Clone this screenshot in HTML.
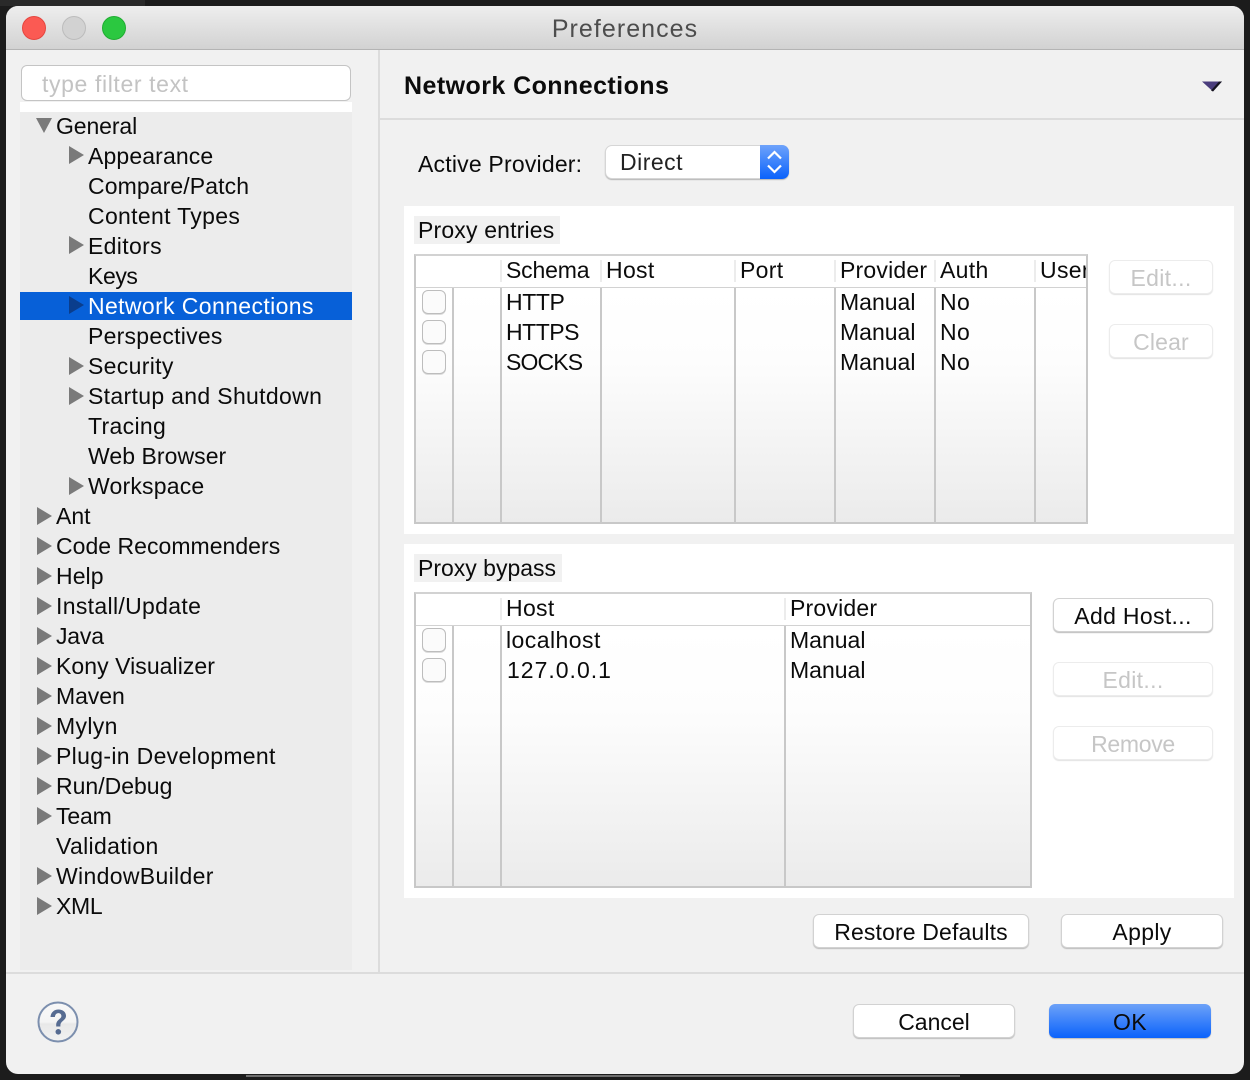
<!DOCTYPE html>
<html><head><meta charset="utf-8"><style>
html,body{margin:0;padding:0}
body{width:1250px;height:1080px;background:#1c1c1c;position:relative;overflow:hidden;font-family:"Liberation Sans",sans-serif;font-size:23px;letter-spacing:.33px;color:#0b0b0b}
#w{position:absolute;left:6px;top:6px;width:1238px;height:1068px;background:#f1f1f1;border-radius:12px;overflow:hidden}
.a{position:absolute}
.t{position:absolute;white-space:nowrap;line-height:30px;height:30px}
.b{position:absolute;box-sizing:border-box;background:#fff;border-radius:6px;border:1px solid #d2d2d2;box-shadow:0 1px 1px #bbb;text-align:center;line-height:34px;white-space:nowrap}
.d{color:#c6c6c6;box-shadow:0 1px 1px #e2e2e2;border-color:#ececec}
.c{position:absolute;box-sizing:border-box;left:422px;width:24px;height:24px;border:1px solid #bdbdbd;border-radius:6px;background:#fbfbfb;box-shadow:0 1px 0 #ddd}
.l{position:absolute;width:2px;background:#c8c8c8}
.h{position:absolute;width:2px;background:#ececec;height:22px}
svg{position:absolute}
</style></head><body>
<div class="a" style="left:0;top:0;width:145px;height:6px;background:#2a2a2a"></div>
<div class="a" style="left:246px;top:1075px;width:714px;height:2px;background:#6e6e6e"></div>
<div id="w" style="position:absolute"></div>
<div class="a" style="left:6px;top:6px;width:1238px;height:44px;border-radius:12px 12px 0 0;background:linear-gradient(#eeeeee,#d2d2d2);border-bottom:1px solid #b4b4b4;box-sizing:border-box"></div>
<div class="a" style="left:22px;top:16px;width:24px;height:24px;border-radius:50%;background:#fb5a53;box-sizing:border-box;border:1px solid #e5463f"></div>
<div class="a" style="left:62px;top:16px;width:24px;height:24px;border-radius:50%;background:#d2d2d2;box-sizing:border-box;border:1px solid #bcbcbc"></div>
<div class="a" style="left:102px;top:16px;width:24px;height:24px;border-radius:50%;background:#2bc840;box-sizing:border-box;border:1px solid #20ad32"></div>
<div class="t" style="left:0;width:1250px;text-align:center;top:14px;font-size:25px;color:#4d4d4d;letter-spacing:1.050px">Preferences</div>

<div class="a" style="left:20px;top:102px;width:332px;height:868px;background:#ececec"></div>
<div class="a" style="left:20px;top:102px;width:332px;height:10px;background:#fff"></div>
<div class="a" style="left:21px;top:65px;width:330px;height:36px;box-sizing:border-box;background:#fff;border:1px solid #c4c4c4;border-radius:6px"></div>
<div class="t" style="left:42px;top:69px;color:#c3c3c3;letter-spacing:.62px">type filter text</div>
<div class="a" style="left:20px;top:292px;width:332px;height:28px;background:#0760d8"></div>
<div class="a" style="left:378px;top:50px;width:2px;height:922px;background:#dcdcdc"></div>
<div class="a" style="left:380px;top:118px;width:864px;height:2px;background:#dcdcdc"></div>
<div class="a" style="left:6px;top:972px;width:1238px;height:2px;background:#dcdcdc"></div>

<svg style="left:0;top:0" width="360" height="930">
<g fill="#7a7a7a">
<path d="M36 118h16l-8 15z"/>
<path d="M69 146l15 9-15 9z"/>
<path d="M69 236l15 9-15 9z"/>
<path d="M69 357l15 9-15 9z"/>
<path d="M69 387l15 9-15 9z"/>
<path d="M69 477l15 9-15 9z"/>
<path d="M37 507l15 9-15 9z"/>
<path d="M37 537l15 9-15 9z"/>
<path d="M37 567l15 9-15 9z"/>
<path d="M37 597l15 9-15 9z"/>
<path d="M37 627l15 9-15 9z"/>
<path d="M37 657l15 9-15 9z"/>
<path d="M37 687l15 9-15 9z"/>
<path d="M37 717l15 9-15 9z"/>
<path d="M37 747l15 9-15 9z"/>
<path d="M37 777l15 9-15 9z"/>
<path d="M37 807l15 9-15 9z"/>
<path d="M37 867l15 9-15 9z"/>
<path d="M37 897l15 9-15 9z"/>
</g>
<path d="M69 296l15 9-15 9z" fill="#0a3d8c"/>
</svg>
<div class="t" style="left:56px;top:111px;letter-spacing:-.1px">General</div>
<div class="t" style="left:88px;top:141px;letter-spacing:.13px">Appearance</div>
<div class="t" style="left:88px;top:171px;letter-spacing:.1px">Compare/Patch</div>
<div class="t" style="left:88px;top:201px">Content Types</div>
<div class="t" style="left:88px;top:231px">Editors</div>
<div class="t" style="left:88px;top:261px;letter-spacing:-.4px">Keys</div>
<div class="t" style="left:88px;top:291px;color:#fff;letter-spacing:.38px">Network Connections</div>
<div class="t" style="left:88px;top:321px;letter-spacing:.25px">Perspectives</div>
<div class="t" style="left:88px;top:351px">Security</div>
<div class="t" style="left:88px;top:381px">Startup and Shutdown</div>
<div class="t" style="left:88px;top:411px">Tracing</div>
<div class="t" style="left:88px;top:441px;letter-spacing:.06px">Web Browser</div>
<div class="t" style="left:88px;top:471px;letter-spacing:.2px">Workspace</div>
<div class="t" style="left:56px;top:501px;letter-spacing:0">Ant</div>
<div class="t" style="left:56px;top:531px;letter-spacing:.03px">Code Recommenders</div>
<div class="t" style="left:56px;top:561px;letter-spacing:.08px">Help</div>
<div class="t" style="left:56px;top:591px">Install/Update</div>
<div class="t" style="left:56px;top:621px;letter-spacing:-.2px">Java</div>
<div class="t" style="left:56px;top:651px;letter-spacing:.06px">Kony Visualizer</div>
<div class="t" style="left:56px;top:681px;letter-spacing:-.07px">Maven</div>
<div class="t" style="left:56px;top:711px">Mylyn</div>
<div class="t" style="left:56px;top:741px">Plug-in Development</div>
<div class="t" style="left:56px;top:771px;letter-spacing:0">Run/Debug</div>
<div class="t" style="left:56px;top:801px;letter-spacing:-.17px">Team</div>
<div class="t" style="left:56px;top:831px">Validation</div>
<div class="t" style="left:56px;top:861px">WindowBuilder</div>
<div class="t" style="left:56px;top:891px;letter-spacing:-.33px">XML</div>

<div class="t" style="left:404px;top:71px;font-weight:bold;font-size:25px;letter-spacing:.44px">Network Connections</div>
<svg style="left:1200px;top:80px" width="24" height="14"><path d="M2 1.500h20l-9 10z" fill="#4a3d7d"/><path d="M22 1.500l-9 10-2-1 8-9z" fill="#15131f"/></svg>

<div class="t" style="left:418px;top:149px;letter-spacing:.2px">Active Provider:</div>
<div class="a" style="left:605px;top:145px;width:184px;height:34px;box-sizing:border-box;background:#fff;border:1px solid #d6d6d6;border-radius:7px;box-shadow:0 1px 1px #b5b5b5"></div>
<div class="t" style="left:620px;top:147px;color:#222;letter-spacing:.5px">Direct</div>
<div class="a" style="left:760px;top:145px;width:29px;height:34px;border-radius:0 7px 7px 0;background:linear-gradient(#6ea3fb,#0a62fb)"></div>
<svg style="left:760px;top:145px" width="29" height="34"><path d="M8 13.500l6.500-6.500 6.500 6.500M8 20.500l6.500 6.500 6.500-6.500" fill="none" stroke="#fff" stroke-width="2.200"/></svg>

<div class="a" style="left:404px;top:206px;width:830px;height:328px;background:#fff"></div>
<div class="a" style="left:414px;top:216px;width:146px;height:28px;background:#f1f1f1"></div>
<div class="t" style="left:418px;top:215px;letter-spacing:.17px">Proxy entries</div>
<div class="a" style="left:414px;top:254px;width:674px;height:270px;box-sizing:border-box;border:2px solid #c8c8c8;border-top-color:#d2d2d2;background:linear-gradient(#fff 12%,#fdfdfd 40%,#ebebeb 100%)"></div>
<div class="a" style="left:416px;top:287px;width:670px;height:1px;background:#d2d2d2"></div>
<div class="l" style="left:452px;top:288px;height:234px"></div>
<div class="l" style="left:500px;top:288px;height:234px"></div>
<div class="l" style="left:600px;top:288px;height:234px"></div>
<div class="l" style="left:734px;top:288px;height:234px"></div>
<div class="l" style="left:834px;top:288px;height:234px"></div>
<div class="l" style="left:934px;top:288px;height:234px"></div>
<div class="l" style="left:1034px;top:288px;height:234px"></div>
<div class="h" style="left:500px;top:260px"></div>
<div class="h" style="left:600px;top:260px"></div>
<div class="h" style="left:734px;top:260px"></div>
<div class="h" style="left:834px;top:260px"></div>
<div class="h" style="left:934px;top:260px"></div>
<div class="h" style="left:1034px;top:260px"></div>
<div class="t" style="left:506px;top:255px;letter-spacing:-.17px">Schema</div>
<div class="t" style="left:606px;top:255px">Host</div>
<div class="t" style="left:740px;top:255px">Port</div>
<div class="t" style="left:840px;top:255px;letter-spacing:.2px">Provider</div>
<div class="t" style="left:940px;top:255px">Auth</div>
<div class="t" style="left:1040px;top:255px;width:46px;overflow:hidden">User</div>
<div class="c" style="top:290px"></div><div class="c" style="top:320px"></div><div class="c" style="top:350px"></div>
<div class="t" style="left:506px;top:287px;letter-spacing:-.42px">HTTP</div>
<div class="t" style="left:506px;top:317px;letter-spacing:-.47px">HTTPS</div>
<div class="t" style="left:506px;top:347px;letter-spacing:-.87px">SOCKS</div>
<div class="t" style="left:840px;top:287px;letter-spacing:0">Manual</div>
<div class="t" style="left:840px;top:317px;letter-spacing:0">Manual</div>
<div class="t" style="left:840px;top:347px;letter-spacing:0">Manual</div>
<div class="t" style="left:940px;top:287px">No</div>
<div class="t" style="left:940px;top:317px">No</div>
<div class="t" style="left:940px;top:347px">No</div>
<div class="b d" style="left:1109px;top:260px;width:104px;height:34px">Edit...</div>
<div class="b d" style="left:1109px;top:324px;width:104px;height:34px;letter-spacing:.15px">Clear</div>

<div class="a" style="left:404px;top:544px;width:830px;height:354px;background:#fff"></div>
<div class="a" style="left:414px;top:554px;width:148px;height:28px;background:#f1f1f1"></div>
<div class="t" style="left:418px;top:553px;letter-spacing:0">Proxy bypass</div>
<div class="a" style="left:414px;top:592px;width:618px;height:296px;box-sizing:border-box;border:2px solid #c8c8c8;border-top-color:#d2d2d2;background:linear-gradient(#fff 12%,#fdfdfd 40%,#ebebeb 100%)"></div>
<div class="a" style="left:416px;top:625px;width:614px;height:1px;background:#d2d2d2"></div>
<div class="l" style="left:452px;top:626px;height:260px"></div>
<div class="l" style="left:500px;top:626px;height:260px"></div>
<div class="l" style="left:784px;top:626px;height:260px"></div>
<div class="h" style="left:500px;top:598px"></div>
<div class="h" style="left:784px;top:598px"></div>
<div class="t" style="left:506px;top:593px">Host</div>
<div class="t" style="left:790px;top:593px;letter-spacing:.2px">Provider</div>
<div class="c" style="top:628px"></div><div class="c" style="top:658px"></div>
<div class="t" style="left:506px;top:625px;letter-spacing:.45px">localhost</div>
<div class="t" style="left:507px;top:655px;letter-spacing:1px">127.0.0.1</div>
<div class="t" style="left:790px;top:625px;letter-spacing:0">Manual</div>
<div class="t" style="left:790px;top:655px;letter-spacing:0">Manual</div>
<div class="b" style="left:1053px;top:598px;width:160px;height:34px">Add Host...</div>
<div class="b d" style="left:1053px;top:662px;width:160px;height:34px">Edit...</div>
<div class="b d" style="left:1053px;top:726px;width:160px;height:34px;letter-spacing:-.33px">Remove</div>

<div class="b" style="left:813px;top:914px;width:216px;height:34px;letter-spacing:.14px">Restore Defaults</div>
<div class="b" style="left:1061px;top:914px;width:162px;height:34px">Apply</div>
<div class="b" style="left:853px;top:1004px;width:162px;height:34px;letter-spacing:0">Cancel</div>
<div class="b" style="left:1049px;top:1004px;width:162px;height:34px;border:0;line-height:36px;background:linear-gradient(#6da2f8,#0a62fb)">OK</div>

<svg style="left:36px;top:1000px" width="44" height="44">
<defs><linearGradient id="g" x1="0" y1="0" x2="0" y2="1"><stop offset="0" stop-color="#f8f8f8"/><stop offset=".5" stop-color="#f4f4f4"/><stop offset=".55" stop-color="#e8e8e8"/><stop offset="1" stop-color="#f2f2f2"/></linearGradient></defs>
<circle cx="22" cy="22" r="19.500" fill="url(#g)" stroke="#7c8fae" stroke-width="2"/>
<path d="M14.500 17c.3-4.500 3.500-7.500 8-7.500 4.300 0 7.500 2.600 7.500 6.300 0 4.800-5.600 5-5.600 9.700v1h-4.200v-1.300c0-5.800 5.200-6 5.200-9.200 0-1.700-1.300-2.900-3-2.900-2 0-3.300 1.400-3.500 3.900z" fill="#566b91"/>
<circle cx="22.300" cy="31.800" r="2.800" fill="#566b91"/>
</svg>
</body></html>
